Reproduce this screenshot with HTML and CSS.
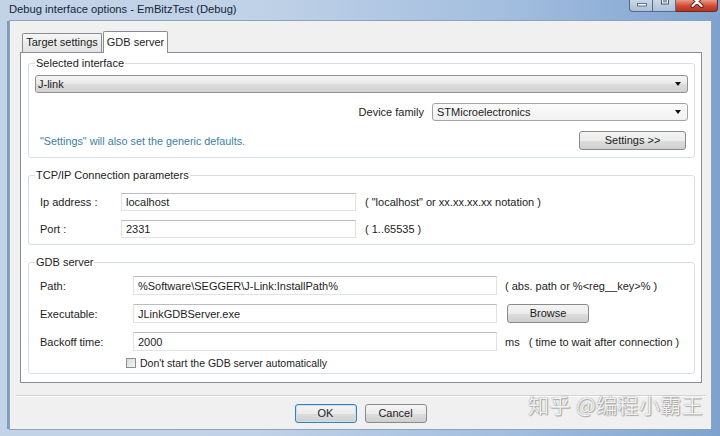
FILE: index.html
```html
<!DOCTYPE html>
<html>
<head>
<meta charset="utf-8">
<link rel="stylesheet" href="styles.css">
</head>
<body>
<div class="window">
  <div class="titlebar">
    <span class="title">Debug interface options - EmBitzTest (Debug)</span>
    <div class="caption">
      <span class="cb min"><svg width="23" height="12" viewBox="0 0 23 12"><rect x="7.5" y="4.5" width="9" height="2.5" fill="#f4f7fb" stroke="#4a5a70" stroke-width="0.8"/></svg></span>
      <span class="cb max"><svg width="24" height="12" viewBox="0 0 24 12"><rect x="8.5" y="-2" width="7" height="7" fill="#f4f7fb" stroke="#3b4a5e" stroke-width="0.9"/><rect x="10" y="1" width="4" height="2.5" fill="#8a9cb4"/></svg></span>
      <span class="cb close"><svg width="42" height="12" viewBox="0 0 42 12"><path d="M16.5 -2 L25.5 7 M25.5 -2 L16.5 7" stroke="#5a1c14" stroke-width="4" stroke-linecap="round"/><path d="M16.5 -2 L25.5 7 M25.5 -2 L16.5 7" stroke="#ffffff" stroke-width="2.2" stroke-linecap="round"/></svg></span>
    </div>
  </div>
  <div class="client">
    <div class="tabs">
      <div class="tab t1">Target settings</div>
      <div class="tab t2 active">GDB server</div>
    </div>
    <div class="panel">
      <fieldset class="group g1">
        <legend>Selected interface</legend>
        <div class="combo gray"><span>J-link</span><i class="arrow"></i></div>
        <div class="row family">
          <span class="family-label">Device family</span>
          <div class="combo light family-combo"><span>STMicroelectronics</span><i class="arrow"></i></div>
        </div>
        <div class="row hint">
          <span class="note-teal">"Settings" will also set the generic defaults.</span>
          <div class="btn settings">Settings &gt;&gt;</div>
        </div>
      </fieldset>

      <fieldset class="group g2">
        <legend>TCP/IP Connection parameters</legend>
        <div class="grid grid2">
          <span class="lbl">Ip address :</span>
          <div class="input">localhost</div>
          <span class="note">( "localhost" or xx.xx.xx.xx notation )</span>
          <span class="lbl">Port :</span>
          <div class="input">2331</div>
          <span class="note">( 1..65535 )</span>
        </div>
      </fieldset>

      <fieldset class="group g3">
        <legend>GDB server</legend>
        <div class="grid grid3">
          <span class="lbl">Path:</span>
          <div class="input">%Software\SEGGER\J-Link:InstallPath%</div>
          <span class="note">( abs. path or %&lt;reg__key&gt;% )</span>
          <span class="lbl">Executable:</span>
          <div class="input">JLinkGDBServer.exe</div>
          <div class="btn browse">Browse</div>
          <span class="lbl">Backoff time:</span>
          <div class="input">2000</div>
          <span class="note">ms &nbsp;&nbsp;( time to wait after connection )</span>
        </div>
        <div class="check-row">
          <span class="checkbox"></span>
          <span class="check-text">Don't start the GDB server automatically</span>
        </div>
      </fieldset>
    </div>
    <div class="sep"></div>
    <div class="footer">
      <div class="btn dlg default">OK</div>
      <div class="btn dlg">Cancel</div>
    </div>
  </div>
  <div class="watermark">知乎 @编程小霸王</div>
</div>
</body>
</html>
```

FILE: styles.css
```css
html, body {
  margin: 0;
  padding: 0;
}
body {
  font-family: "Liberation Sans", Arial, sans-serif;
  font-size: 11px;
  color: #1c1c1c;
}
.window {
  position: relative;
  width: 720px;
  height: 436px;
  display: flex;
  flex-direction: column;
  overflow: hidden;
  background: linear-gradient(90deg, #c3d3e7 0%, #c0d2e7 35%, #a3bedf 70%, #7ea3cf 100%);
}
.titlebar {
  height: 20px;
  flex: none;
  display: flex;
  justify-content: space-between;
  align-items: flex-start;
  padding-left: 9px;
}
.title {
  font-size: 11.2px;
  line-height: 19px;
  color: #15243a;
}
.caption {
  display: flex;
  margin-right: 2px;
}
.cb {
  display: block;
  height: 12px;
  box-sizing: border-box;
  border: 1px solid #56698a;
  border-top: none;
}
.cb svg {
  display: block;
  margin-top: -1px;
}
.cb.min {
  width: 23px;
  border-right: none;
  border-radius: 0 0 0 4px;
  background: linear-gradient(#c9d7e8, #aebfd6);
}
.cb.max {
  width: 24px;
  background: linear-gradient(#c9d7e8, #aebfd6);
}
.cb.close {
  width: 42px;
  border-left: none;
  border-color: #6a2a22;
  border-radius: 0 0 4px 0;
  background: linear-gradient(#e79b86, #cf4a36 55%, #b9311f);
}
.client {
  flex: 1;
  margin: 0 8px 6px 9px;
  background: #f0f0f0;
  border: 1px solid #8fa2bb;
  box-shadow: -3px 0 0 -1px #7d9cc4;
  display: flex;
  flex-direction: column;
}
.tabs {
  margin: 10px 9px 0 12px;
  height: 21px;
  display: flex;
  align-items: flex-end;
}
.tab {
  box-sizing: border-box;
  height: 19px;
  line-height: 17px;
  text-align: center;
  border: 1px solid #898c95;
  border-bottom: none;
  border-radius: 2px 2px 0 0;
  background: linear-gradient(#f6f6f6, #e3e3e3);
}
.tab.t1 {
  width: 80px;
}
.tab.t2 {
  width: 65px;
  margin-left: 1px;
}
.tab.active {
  height: 22px;
  line-height: 20px;
  margin-bottom: -1px;
  background: #ffffff;
  position: relative;
  z-index: 1;
}
.panel {
  margin: 0 9px 0 10px;
  border: 1px solid #898c95;
  background: #ffffff;
  padding: 4px 0 8px;
}
.group {
  margin: 0 6px 0 7px;
  border: 1px solid #d5dfe5;
  border-radius: 3px;
  padding: 5px 6px 7px;
  min-inline-size: 0;
}
.group legend {
  padding: 0 1px;
  line-height: 13px;
  font-size: 11px;
}
.g2 {
  margin-top: 11px;
  padding: 11px 6px 6px;
}
.g3 {
  margin-top: 11px;
  padding: 7px 6px 4px;
}
.combo {
  box-sizing: border-box;
  height: 18px;
  display: flex;
  align-items: center;
  justify-content: space-between;
  border: 1px solid #8e8f8f;
  border-radius: 3px;
}
.combo.gray {
  padding: 0 6px 0 2px;
  background: linear-gradient(#f4f4f4, #e9e9e9 50%, #dcdcdc 51%, #d2d2d2);
}
.combo.light {
  padding: 0 6px 0 4px;
  background: linear-gradient(#fbfbfb, #f1f1f1);
  border-color: #a3a3a3;
}
.arrow {
  width: 0;
  height: 0;
  border-left: 3.5px solid transparent;
  border-right: 3.5px solid transparent;
  border-top: 4px solid #111;
}
.row {
  display: flex;
  align-items: center;
  margin-top: 10px;
}
.family {
  justify-content: flex-end;
}
.family-label {
  margin-right: 8px;
}
.family-combo {
  width: 256px;
}
.hint {
  justify-content: space-between;
}
.note-teal {
  padding-left: 5px;
  color: #3b7fa3;
  font-size: 10.8px;
}
.btn {
  box-sizing: border-box;
  height: 19px;
  line-height: 17px;
  text-align: center;
  border: 1px solid #8a8a8a;
  border-radius: 3px;
  background: linear-gradient(#f4f4f4, #ebebeb 50%, #dddddd 51%, #cfcfcf);
}
.settings {
  width: 107px;
  margin-right: 2px;
}
.grid {
  display: grid;
  align-items: center;
}
.grid2 {
  grid-template-columns: 86px 235px auto;
  grid-auto-rows: 18px;
  row-gap: 9px;
}
.grid3 {
  grid-template-columns: 98px 364px auto;
  grid-auto-rows: 19px;
  row-gap: 9px;
}
.lbl {
  padding-left: 5px;
}
.input {
  box-sizing: border-box;
  height: 100%;
  padding-left: 4px;
  display: flex;
  align-items: center;
  border: 1px solid #dfe3e8;
  border-top-color: #b9bdc3;
  background: #ffffff;
}
.grid2 .note {
  padding-left: 9px;
}
.grid3 .note {
  padding-left: 8px;
}
.browse {
  width: 82px;
  margin-left: 10px;
}
.check-row {
  margin-top: 5px;
  height: 13px;
  display: flex;
  align-items: center;
  padding-left: 91px;
}
.check-text {
  font-size: 10.5px;
}
.checkbox {
  box-sizing: border-box;
  width: 10px;
  height: 10px;
  margin-right: 4px;
  border: 1px solid #8e8f8f;
  background: linear-gradient(135deg, #d8d8d8, #f6f6f6);
}
.sep {
  margin: 12px 5px 0 6px;
  height: 1px;
  background: #d5d5d5;
  border-bottom: 1px solid #ffffff;
}
.footer {
  margin-top: 7px;
  display: flex;
  justify-content: center;
  gap: 8px;
}
.dlg {
  width: 62px;
}
.dlg.default {
  border-color: #3c7fb1;
  box-shadow: inset 0 0 0 1px #bfe3f7;
}
.watermark {
  position: absolute;
  left: 528px;
  top: 393px;
  font-family: "Noto Sans CJK SC", "Liberation Sans", sans-serif;
  font-size: 21px;
  line-height: 22px;
  color: rgba(255, 255, 255, 0.92);
  text-shadow: 0 0 1px rgba(0, 0, 0, 0.5), 1px 1px 1px rgba(0, 0, 0, 0.25);
  letter-spacing: 0.4px;
}
```
